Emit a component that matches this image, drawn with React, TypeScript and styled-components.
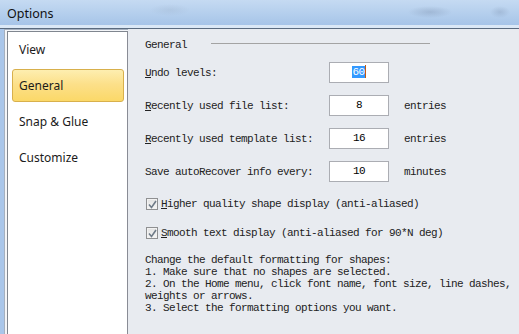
import React from 'react';
import styled, {createGlobalStyle} from 'styled-components';

const GlobalStyle = createGlobalStyle`
  html, body {
    margin: 0;
    padding: 0;
    overflow: hidden;
    background: #e8ebf0;
  }
`;

const mono = `"Liberation Mono", "DejaVu Sans Mono", monospace`;
const sans = `"Noto Sans", "Liberation Sans", sans-serif`;

const Window = styled.div`
  width: 519px;
  height: 334px;
  display: flex;
  flex-direction: column;
  overflow: hidden;
`;

const TitleBar = styled.div`
  flex: none;
  height: 29px;
  box-sizing: border-box;
  padding: 0 0 1px 7px;
  display: flex;
  align-items: center;
  border-bottom: 1px solid #5a6b80;
  background:
    radial-gradient(ellipse 22px 6px at 430px 12px, rgba(120, 140, 170, 0.35), transparent),
    radial-gradient(ellipse 20px 6px at 170px 10px, rgba(150, 170, 195, 0.25), transparent),
    radial-gradient(ellipse 10px 6px at 500px 12px, rgba(120, 140, 170, 0.3), transparent),
    linear-gradient(to bottom, #c5daf2 0%, #b2cdec 55%, #a6c4e8 90%, #dbe8f6 91%, #dbe8f6 100%);
  font-family: ${sans};
  font-size: 12.5px;
  color: #111;
`;

const Body = styled.div`
  flex: 1;
  display: flex;
  border-left: 4px solid #a9c6ea;
  background: #e8ebf0;
`;

const NavFrame = styled.div`
  flex: none;
  width: 124px;
  box-sizing: border-box;
  display: flex;
  padding: 1px 0 0 2px;
  border-top: 1px solid #a5b0bf;
  border-left: 1px solid #a5b0bf;
  background: #f3f5f8;
`;

const NavList = styled.div`
  flex: 1;
  padding: 1px 3px 0 4px;
  background: #fff;
  border-top: 1px solid #80868f;
  border-left: 1px solid #80868f;
  border-right: 1px solid #898c95;
`;

const NavItem = styled.div<{ active?: boolean }>`
  height: 33px;
  box-sizing: border-box;
  margin-bottom: 3px;
  padding-left: 6px;
  display: flex;
  align-items: center;
  border-radius: 3px;
  border: 1px solid ${p => (p.active ? '#d8b04c' : 'transparent')};
  background: ${p => (p.active ? 'linear-gradient(to bottom, #fdeeb0 0%, #fce08a 45%, #fbd868 100%)' : 'transparent')};
  font-family: ${sans};
  font-size: 12px;
  color: #1b1b1b;
`;

const Content = styled.div`
  flex: 1;
  display: flex;
  flex-direction: column;
  padding: 9px 0 0 17px;
  font-family: ${mono};
  font-size: 11px;
  letter-spacing: -0.6px;
  color: #222;
`;

const Header = styled.div`
  display: flex;
  align-items: center;
  height: 14px;
  line-height: 14px;
`;

const Rule = styled.div`
  width: 219px;
  height: 1px;
  margin: 0 0 4px 24px;
  background: #a3a3a3;
`;

const Fields = styled.div`
  margin-top: 10px;
  display: grid;
  grid-template-columns: 184px 60px auto;
  row-gap: 12px;
  align-items: center;
`;

const Label = styled.span`
  white-space: pre;
`;

const Key = styled.span`
  text-decoration: underline;
  text-underline-offset: 1px;
`;

const InputBox = styled.div`
  height: 21px;
  box-sizing: border-box;
  padding-bottom: 2px;
  display: flex;
  align-items: center;
  justify-content: center;
  border: 1px solid #abadb3;
  background: #fff;
  color: #000;
`;

const Selected = styled.span`
  background: #3399ff;
  color: #fff;
  line-height: 12px;
`;

const Caret = styled.span`
  width: 1px;
  height: 13px;
  background: #c35a10;
`;

const Unit = styled.span`
  margin-left: 15px;
`;

const CheckRow = styled.div<{ first?: boolean }>`
  margin-top: ${p => (p.first ? 15 : 15)}px;
  height: 14px;
  display: flex;
  align-items: center;
  gap: 3px;
  padding-left: 1px;
  white-space: pre;
`;

const Box = styled.span`
  width: 12px;
  height: 12px;
  box-sizing: border-box;
  display: flex;
  align-items: center;
  justify-content: center;
  border: 1px solid #8f9092;
  box-shadow: inset 0 0 0 1px #f2f2f2;
  background: linear-gradient(to bottom, #e2e2e2, #f6f6f6);
`;

const Notes = styled.div`
  margin-top: 14px;
  line-height: 12px;
  white-space: pre;
`;

const Check = () => (
  <Box>
    <svg width="9" height="9" viewBox="0 0 9 9">
      <path d="M1 4.5 L3.5 7.5 L8 1" fill="none" stroke="#6f7b88" strokeWidth="1.6"/>
    </svg>
  </Box>
);

const navItems = ['View', 'General', 'Snap & Glue', 'Customize'];

export default function App() {
  return (
    <Window>
      <GlobalStyle/>
      <TitleBar>Options</TitleBar>
      <Body>
        <NavFrame>
          <NavList>
            {navItems.map(item => (
              <NavItem key={item} active={item === 'General'}>{item}</NavItem>
            ))}
          </NavList>
        </NavFrame>
        <Content>
          <Header>
            General
            <Rule/>
          </Header>
          <Fields>
            <Label><Key>U</Key>ndo levels:</Label>
            <InputBox><Selected>60</Selected><Caret/></InputBox>
            <span/>
            <Label><Key>R</Key>ecently used file list:</Label>
            <InputBox>8</InputBox>
            <Unit>entries</Unit>
            <Label><Key>R</Key>ecently used template list:</Label>
            <InputBox>16</InputBox>
            <Unit>entries</Unit>
            <Label>Save autoRecover info every:</Label>
            <InputBox>10</InputBox>
            <Unit>minutes</Unit>
          </Fields>
          <CheckRow first>
            <Check/>
            <span><Key>H</Key>igher quality shape display (anti-aliased)</span>
          </CheckRow>
          <CheckRow>
            <Check/>
            <span><Key>S</Key>mooth text display (anti-aliased for 90*N deg)</span>
          </CheckRow>
          <Notes>
            {'Change the default formatting for shapes:\n' +
              '1. Make sure that no shapes are selected.\n' +
              '2. On the Home menu, click font name, font size, line dashes,\n' +
              'weights or arrows.\n' +
              '3. Select the formatting options you want.'}
          </Notes>
        </Content>
      </Body>
    </Window>
  );
}
